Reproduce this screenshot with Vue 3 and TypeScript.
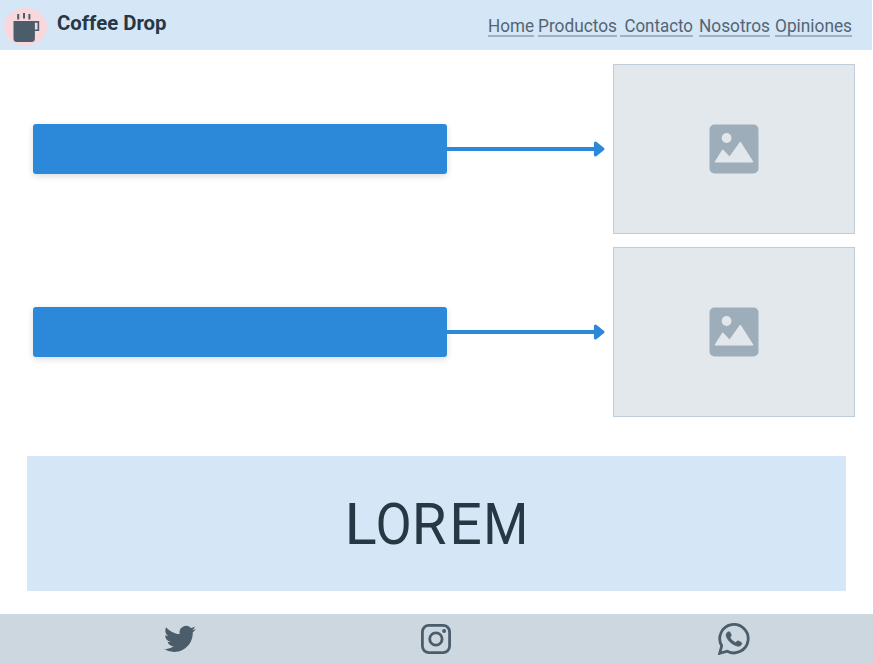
<script setup lang="ts">
interface NavLink {
  label: string
  width: number
  gap: number
  inset: number
}
interface Glyph {
  char: string
  x: number
  width: number
}

const links: NavLink[] = [
  { label: 'Home', width: 46, gap: 0, inset: 0 },
  { label: 'Productos', width: 79, gap: 4, inset: 0 },
  { label: 'Contacto', width: 73, gap: 3, inset: 4.5 },
  { label: 'Nosotros', width: 71, gap: 6, inset: 0 },
  { label: 'Opiniones', width: 77, gap: 5, inset: 0 },
]
const rows = [1, 2]
const headline: Glyph[] = [
  { char: 'L', x: 7.4, width: 32.3 },
  { char: 'O', x: 38.5, width: 36.2 },
  { char: 'R', x: 74.8, width: 34.8 },
  { char: 'E', x: 112.3, width: 32.6 },
  { char: 'M', x: 146.3, width: 45 },
]
</script>

<template>
  <div class="page">
    <header class="header">
      <svg class="logo" viewBox="0 0 50 50">
        <ellipse cx="25.5" cy="26.9" rx="21.5" ry="18.9" fill="#f8d8dc" />
        <path d="M13.5 21H39.2V31H34.9V38.5Q34.9 42 31.4 42H17Q13.5 42 13.5 38.5Z M34.9 22.8V29.4H37.5V22.8Z" fill="#4b5d6b" fill-rule="evenodd" />
        <path d="M18.2 14V19.4M24 13V18.4M29.4 14V19.4" stroke="#4b5d6b" stroke-width="2" />
      </svg>
      <svg class="brand" width="112" height="50">
        <text x="7" y="30" textLength="109.5" lengthAdjust="spacingAndGlyphs">Coffee Drop</text>
      </svg>
      <nav class="nav">
        <a v-for="link in links" :key="link.label" class="link" :style="{ width: link.width + 'px', marginLeft: link.gap + 'px' }">
          <svg class="label" :width="link.width" height="24">
            <text :x="link.inset" y="21" :textLength="link.width - link.inset" lengthAdjust="spacingAndGlyphs">{{ link.label }}</text>
          </svg>
        </a>
      </nav>
    </header>

    <main class="main">
      <section v-for="row in rows" :key="row" class="row">
        <div class="bar"></div>
        <svg class="arrow" width="158" height="20" viewBox="0 0 158 20">
          <path d="M0 10H149" stroke="#2c88d9" stroke-width="4" />
          <path d="M148.6 4.2L155.7 10L148.6 15.8Z" fill="#2c88d9" stroke="#2c88d9" stroke-width="3.4" stroke-linejoin="round" />
        </svg>
        <div class="picture">
          <svg width="50" height="50" viewBox="0 0 50 50">
            <rect x=".5" y=".5" width="49" height="49" rx="5" fill="#9eadba" />
            <circle cx="17.6" cy="14" r="4.9" fill="#e2e7eb" />
            <path d="M6 38L13.7 25.8L20.6 33L31.3 18L44 38Z" fill="#e2e7eb" stroke="#e2e7eb" stroke-width="1" stroke-linejoin="round" />
          </svg>
        </div>
      </section>
      <section class="banner">
        <svg width="200" height="135">
          <text y="88"><tspan v-for="glyph in headline" :key="glyph.char" :x="glyph.x" :textLength="glyph.width" lengthAdjust="spacingAndGlyphs">{{ glyph.char }}</tspan></text>
        </svg>
      </section>
    </main>

    <footer class="footer">
      <svg class="twitter" width="32" height="32" viewBox="0 0 24 24">
        <path fill="#4b5d6b" d="M23.953 4.57a10 10 0 01-2.825.775 4.958 4.958 0 002.163-2.723c-.951.555-2.005.959-3.127 1.184a4.92 4.92 0 00-8.384 4.482C7.69 8.095 4.067 6.13 1.64 3.162a4.822 4.822 0 00-.666 2.475c0 1.71.87 3.213 2.188 4.096a4.904 4.904 0 01-2.228-.616v.06a4.923 4.923 0 003.946 4.827 4.996 4.996 0 01-2.212.085 4.936 4.936 0 004.604 3.417 9.867 9.867 0 01-6.102 2.105c-.39 0-.779-.023-1.17-.067a13.995 13.995 0 007.557 2.209c9.053 0 13.998-7.496 13.998-13.985 0-.21 0-.42-.015-.63A9.935 9.935 0 0024 4.59z" />
      </svg>
      <svg class="instagram" width="32" height="32" viewBox="0 0 32 32" fill="none" stroke="#4b5d6b" stroke-width="2.8">
        <rect x="2.4" y="2.4" width="27.2" height="27.2" rx="6.5" />
        <circle cx="15.9" cy="16" r="6.2" />
        <circle cx="24.1" cy="8" r="2" fill="#4b5d6b" stroke="none" />
      </svg>
      <svg class="whatsapp" width="32" height="32" viewBox="0 0 32 32">
        <path d="M1.7 30.3L3.7 22.8A14.2 14.2 0 1 1 9.3 28.2Z" fill="none" stroke="#4b5d6b" stroke-width="2.8" />
        <path d="M9.2 9.6C10 8.7 11 8.5 11.8 9C12.3 9.5 13.2 11.5 13.3 12.3C13.4 13.1 12 14 12.2 14.6C13.4 17 15.2 18.6 17.5 19.5C18.3 19.6 19.2 17.8 19.9 17.8C20.9 18 22.8 19.1 23.6 19.7C24.2 20.7 23 22.7 21.8 23.1C20 23.8 16.5 22.4 14.2 20.8C11.3 18.8 8.5 15.2 8.1 12.7C8 11.4 8.5 10.3 9.2 9.6Z" fill="#4b5d6b" stroke="#4b5d6b" stroke-width=".6" />
      </svg>
    </footer>
  </div>
</template>

<style>
body {
  margin: 0;
  background: #fff;
}
</style>

<style scoped>
.page {
  width: 873px;
  height: 664px;
  display: flex;
  flex-direction: column;
  font-family: Roboto, "Liberation Sans", sans-serif;
  overflow: hidden;
}
svg {
  display: block;
  flex: none;
}
.header {
  width: 872px;
  height: 50px;
  flex: none;
  display: flex;
  background: #d5e6f6;
}
.logo {
  width: 50px;
  height: 50px;
}
.brand {
  overflow: visible;
  font-size: 20.5px;
  font-weight: 700;
  fill: #273744;
}
.nav {
  display: flex;
  margin-left: auto;
  padding: 11px 20px 0 0;
}
.link {
  box-sizing: border-box;
  height: 26px;
  border-bottom: 2px solid #9eb1c5;
}
.label {
  font-size: 18px;
  fill: #536575;
  overflow: visible;
}
.main {
  flex: 1;
  display: flex;
  flex-direction: column;
  gap: 13px;
  padding-top: 14px;
}
.row {
  display: flex;
  align-items: center;
  height: 170px;
  padding: 0 18px 0 33px;
}
.bar {
  width: 414px;
  height: 50px;
  border-radius: 3px;
  background: #2c88d9;
  box-shadow: 0 2px 6px rgba(0, 0, 0, 0.15);
}
.picture {
  box-sizing: border-box;
  width: 242px;
  height: 170px;
  margin-left: auto;
  display: flex;
  align-items: center;
  justify-content: center;
  background: #e2e8ec;
  border: 1px solid #bfcddb;
}
.banner {
  display: flex;
  justify-content: center;
  width: 819px;
  height: 135px;
  margin: 26px 0 0 27px;
  background: #d5e6f6;
  font-size: 57.7px;
  fill: #273744;
}
.footer {
  display: flex;
  align-items: center;
  height: 50px;
  flex: none;
  background: #cdd7df;
}
.twitter {
  margin-left: 164px;
}
.instagram {
  margin-left: 224px;
}
.whatsapp {
  margin-left: 266px;
}
</style>
